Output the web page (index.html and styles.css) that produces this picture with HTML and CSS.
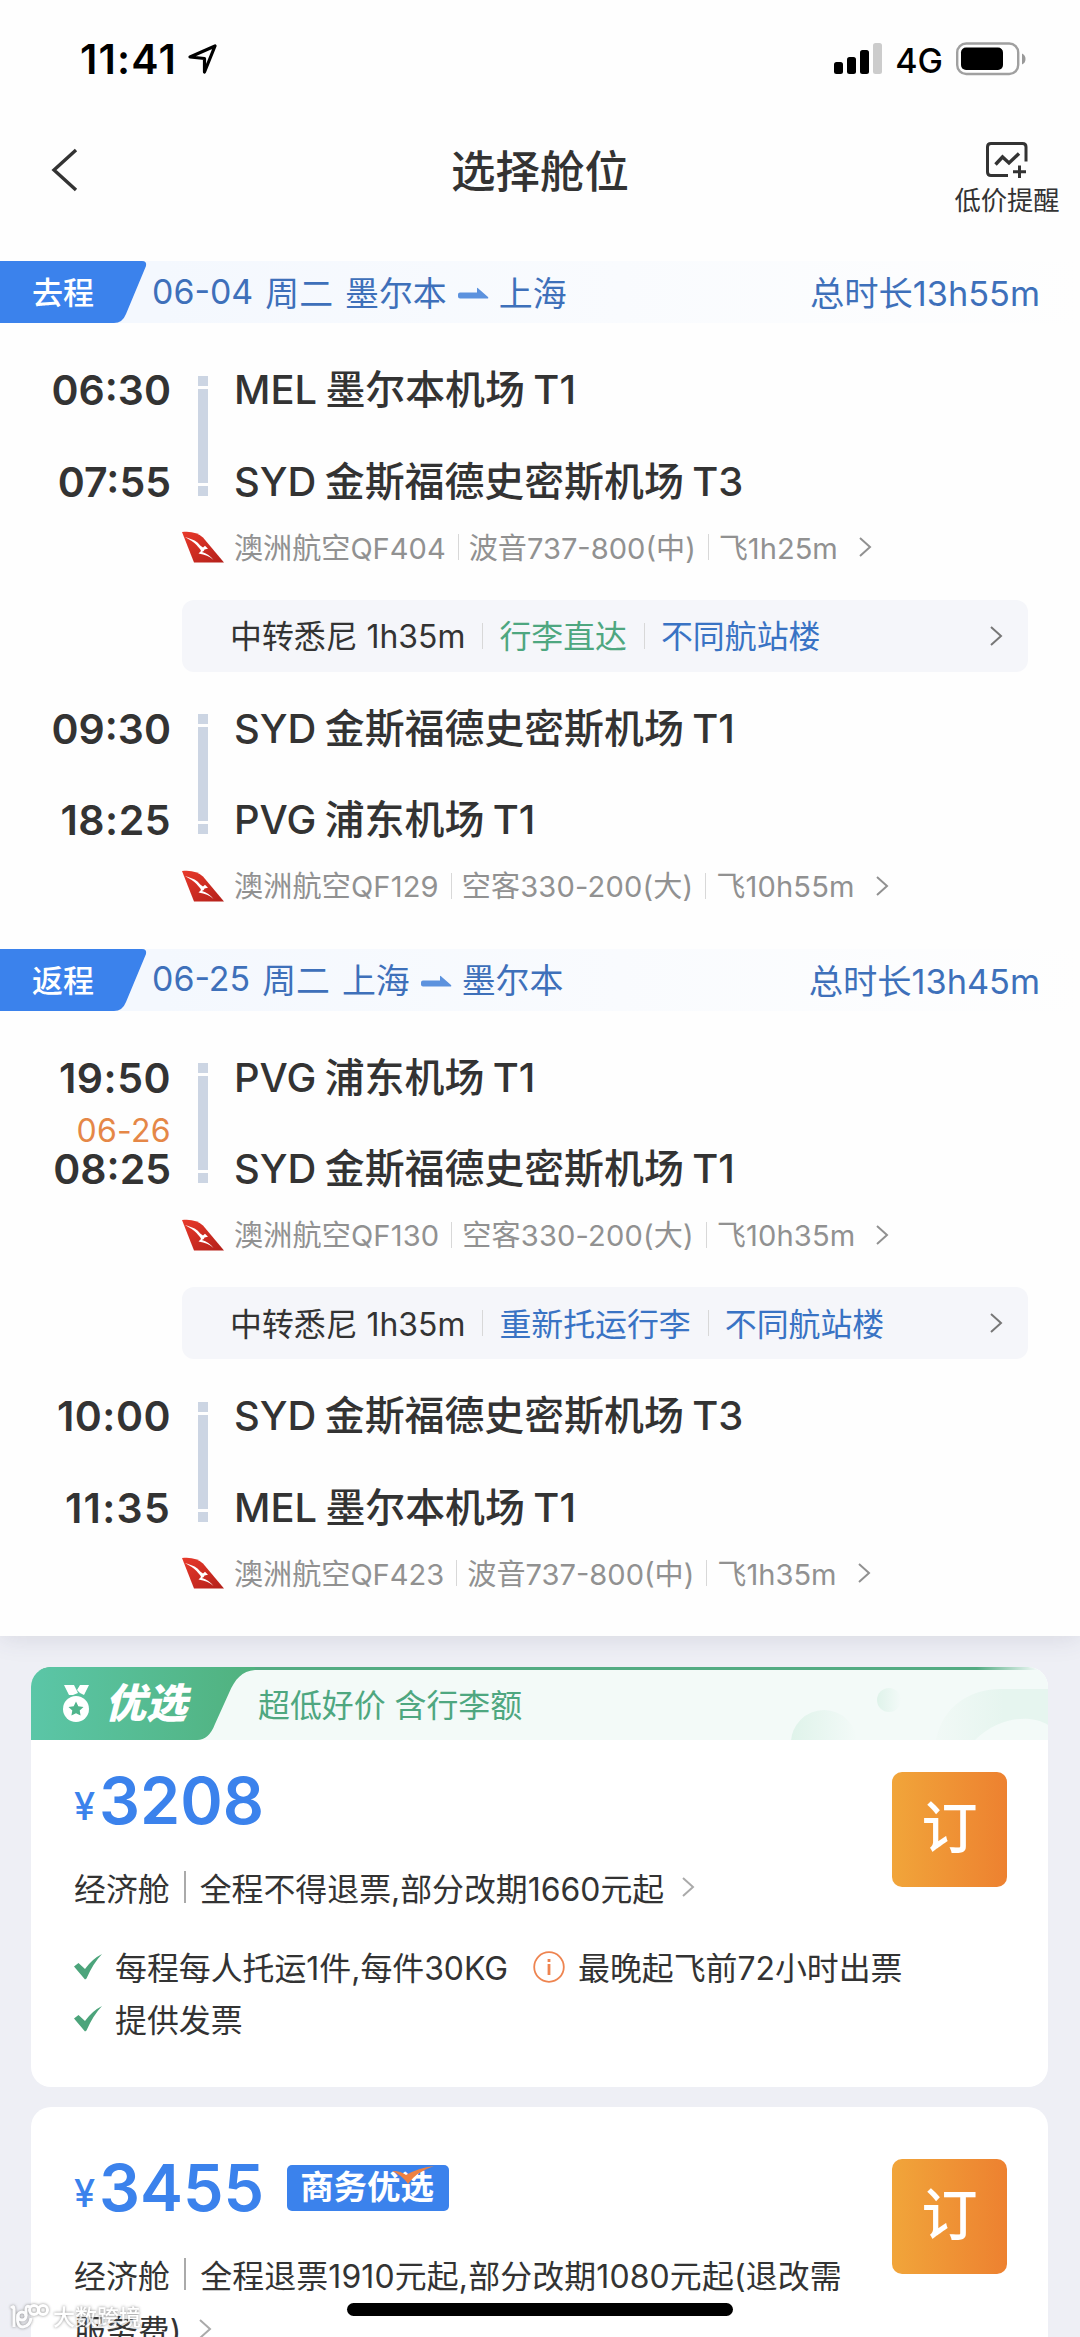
FILE: index.html
```html
<!DOCTYPE html>
<html lang="zh-CN">
<head>
<meta charset="utf-8">
<title>选择舱位</title>
<link rel="stylesheet" href="styles.css">
</head>
<body>
<svg class="defs" width="0" height="0">
  <symbol id="chevron" viewBox="0 0 14 22"><path d="M2 2l10 9-10 9" fill="none" stroke="currentColor" stroke-width="2"/></symbol>
  <symbol id="arrow" viewBox="0 0 32 12"><path d="M1 7.500Q1 5.500 3 5.500H20V1.500Q20 .3 21 1.200L31 10Q32 11.500 30 11.500H3Q1 11.500 1 9.500Z" fill="#5c92de"/></symbol>
  <symbol id="tail" viewBox="0 0 42 32">
    <linearGradient id="red" x1="0" y1="0" x2="1" y2="1"><stop offset="0" stop-color="#e8392a"/><stop offset="1" stop-color="#b3201a"/></linearGradient>
    <path d="M0 1C9-.2 16 2 21 6.500L42 31.500H12Z" fill="url(#red)"/>
    <path d="M3 6C7 7.500 12 8.500 15.500 11.500 17.500 13.500 19 15.500 21 16.500L23 14.800 26 17.800 22.500 18.500C22 20 21 20.500 20 21 24.500 22.200 28.500 25 31.500 29 27.500 25.500 23 23.600 16.500 22.600L19 20C18.500 18 16.500 16.500 14.500 14 11.500 10.500 7.500 9 3 6Z" fill="#fff"/>
  </symbol>
  <symbol id="check" viewBox="0 0 28 26"><path d="M0 12.500L4.500 9 11 15Q18 5 28 0 19 9.500 12.500 24.500L11 25.500 0 12.500Z" fill="#4ca47b"/></symbol>
</svg>

<div class="screen">
  <section class="panel">
    <div class="status">
      <div class="status-left"><span class="clock">11:41</span>
        <svg width="30" height="30" viewBox="0 0 30 30"><path d="M2 13L27 2 16.500 28V14.500Z" fill="none" stroke="#000" stroke-width="3.200" stroke-linejoin="round"/></svg>
      </div>
      <div class="status-right">
        <svg width="49" height="32" viewBox="0 0 49 32"><rect x="0" y="19" width="9" height="12" rx="2.500"/><rect x="13" y="14" width="9" height="17" rx="2.500"/><rect x="26" y="7" width="9" height="24" rx="2.500"/><rect x="39" y="0" width="9" height="31" rx="2.500" fill="#ccc"/></svg>
        <span class="net">4G</span>
        <svg width="70" height="34" viewBox="0 0 70 34"><rect x="1.200" y="1.500" width="61" height="30.500" rx="9" fill="#fff" stroke="#a0a0a0" stroke-width="2.400"/><rect x="5" y="5.500" width="42" height="22.500" rx="5"/><path d="M66 11.500v11q3.500-1.500 3.500-5.500T66 11.500Z" fill="#999"/></svg>
      </div>
    </div>

    <header class="nav">
      <svg class="back" width="28" height="44" viewBox="0 0 28 44"><path d="M25 2L3 22l22 20" fill="none" stroke="#333" stroke-width="3.400"/></svg>
      <h1>选择舱位</h1>
      <div class="alert">
        <svg width="44" height="38" viewBox="0 0 44 38" fill="none" stroke="#333" stroke-width="3"><path d="M41 20.500V6Q41 2.500 37.500 2.500H6Q2.500 2.500 2.500 6V31Q2.500 34.500 6 34.500H23"/><path d="M10.500 23.500l7-7.500 6.500 6L34 12.500" stroke-width="3.400"/><path d="M34.500 24.500V37M28 30.800H41"/></svg>
        <span>低价提醒</span>
      </div>
    </header>

    <div class="strip">
      <div class="dir"><svg width="147" height="62" viewBox="0 0 147 62"><path d="M0 0H142Q147 0 146 5L126 53Q122.500 62 114 62H0Z" fill="#3b82ec"/></svg><span>去程</span></div>
      <div class="route"><span>06-04</span><span>周二</span><span>墨尔本</span><svg width="32" height="12"><use href="#arrow"/></svg><span>上海</span></div>
      <div class="total">总时长13h55m</div>
    </div>
    <div class="journey">
      <div class="leg">
        <div class="time">06:30</div><div class="bar"><i></i><b></b><i></i></div><div class="port">MEL 墨尔本机场 T1</div>
        <div class="time">07:55</div><div class="port">SYD 金斯福德史密斯机场 T3</div>
      </div>
      <div class="plane"><svg class="logo"><use href="#tail"/></svg><span>澳洲航空QF404</span><em></em><span>波音737-800(中)</span><em></em><span>飞1h25m</span><svg class="chev"><use href="#chevron"/></svg></div>
      <div class="transfer"><span>中转悉尼 1h35m</span><em></em><span class="green">行李直达</span><em></em><span class="blue">不同航站楼</span><svg class="chev"><use href="#chevron"/></svg></div>
      <div class="leg">
        <div class="time">09:30</div><div class="bar"><i></i><b></b><i></i></div><div class="port">SYD 金斯福德史密斯机场 T1</div>
        <div class="time loose">18:25</div><div class="port">PVG 浦东机场 T1</div>
      </div>
      <div class="plane wide"><svg class="logo"><use href="#tail"/></svg><span>澳洲航空QF129</span><em></em><span>空客330-200(大)</span><em></em><span>飞10h55m</span><svg class="chev"><use href="#chevron"/></svg></div>
    </div>

    <div class="strip">
      <div class="dir"><svg width="147" height="62" viewBox="0 0 147 62"><path d="M0 0H142Q147 0 146 5L126 53Q122.500 62 114 62H0Z" fill="#3b82ec"/></svg><span>返程</span></div>
      <div class="route"><span>06-25</span><span>周二</span><span>上海</span><svg width="32" height="12"><use href="#arrow"/></svg><span>墨尔本</span></div>
      <div class="total">总时长13h45m</div>
    </div>
    <div class="journey">
      <div class="leg">
        <div class="time loose">19:50</div><div class="bar"><i></i><b></b><i></i></div><div class="port">PVG 浦东机场 T1</div>
        <div class="time"><small>06-26</small>08:25</div><div class="port">SYD 金斯福德史密斯机场 T1</div>
      </div>
      <div class="plane wide"><svg class="logo"><use href="#tail"/></svg><span>澳洲航空QF130</span><em></em><span>空客330-200(大)</span><em></em><span>飞10h35m</span><svg class="chev"><use href="#chevron"/></svg></div>
      <div class="transfer"><span>中转悉尼 1h35m</span><em></em><span class="blue">重新托运行李</span><em></em><span class="blue">不同航站楼</span><svg class="chev"><use href="#chevron"/></svg></div>
      <div class="leg">
        <div class="time loose">10:00</div><div class="bar"><i></i><b></b><i></i></div><div class="port">SYD 金斯福德史密斯机场 T3</div>
        <div class="time looser">11:35</div><div class="port">MEL 墨尔本机场 T1</div>
      </div>
      <div class="plane"><svg class="logo"><use href="#tail"/></svg><span>澳洲航空QF423</span><em></em><span>波音737-800(中)</span><em></em><span>飞1h35m</span><svg class="chev"><use href="#chevron"/></svg></div>
    </div>
  </section>

  <main class="fares">
    <article class="card">
      <div class="ribbon">
        <svg class="ribbon-bg" width="1017" height="73" viewBox="0 0 1017 73">
          <defs>
            <linearGradient id="tab" x1="0" y1="0" x2="230" y2="0" gradientUnits="userSpaceOnUse"><stop offset="0" stop-color="#5bc6a7"/><stop offset="1" stop-color="#50b17d"/></linearGradient>
            <linearGradient id="line" x1="0" x2="1017" y1="0" y2="0" gradientUnits="userSpaceOnUse"><stop offset="0" stop-color="#53ab82"/><stop offset=".93" stop-color="#53ab82"/><stop offset=".99" stop-color="#53ab82" stop-opacity="0"/></linearGradient>
            <linearGradient id="dot"><stop offset="0" stop-color="#dff3ea"/><stop offset="1" stop-color="#f3faf8"/></linearGradient>
            <linearGradient id="ring"><stop offset="0" stop-color="#f1f9f6"/><stop offset=".6" stop-color="#e6f5ef"/></linearGradient>
          </defs>
          <rect width="1017" height="73" fill="#f3faf8"/>
          <circle cx="793" cy="76" r="33" fill="url(#dot)"/><circle cx="858" cy="33" r="12" fill="url(#dot)"/>
          <path d="M905 73C912 38 940 22 970 22H1017V58C1002 48 970 48 944 73Z" fill="url(#ring)"/>
          <rect y="0" width="1017" height="3" fill="url(#line)"/>
          <path d="M0 0H224V3C211 4 204 12 198 26L184 57Q178 73 166 73H0Z" fill="url(#tab)"/>
        </svg>
        <svg class="medal" width="26" height="37" viewBox="0 0 26 37"><path d="M1 0H11L15 8 10 10H6ZM17 0H26L21 10 17 8 14 5Z" fill="#fff"/><circle cx="13" cy="24" r="13" fill="#fff"/><path d="M13 16.500l2.300 4.700 5.200.7-3.800 3.600.9 5.100-4.600-2.400-4.600 2.400.9-5.100-3.800-3.600 5.200-.7Z" fill="#50b58c"/></svg>
        <strong>优选</strong>
        <span class="perk">超低好价 含行李额</span>
      </div>
      <div class="body">
        <div class="info">
          <div class="price"><small>¥</small>3208</div>
          <div class="rule"><span>经济舱</span><em></em><span>全程不得退票,部分改期1660元起</span><svg class="chev"><use href="#chevron"/></svg></div>
          <div class="tags">
            <div><svg width="28" height="26"><use href="#check"/></svg><span>每程每人托运1件,每件30KG</span></div>
            <div class="notice"><svg width="32" height="32" viewBox="0 0 32 32"><circle cx="16" cy="16" r="14.800" fill="none" stroke="#ee8450" stroke-width="1.800"/><path d="M16 13V24M16 8V11" stroke="#ee8450" stroke-width="2.800"/></svg><span>最晚起飞前72小时出票</span></div>
            <div><svg width="28" height="26"><use href="#check"/></svg><span>提供发票</span></div>
          </div>
        </div>
        <button class="book">订</button>
      </div>
    </article>

    <article class="card second">
      <div class="body">
        <div class="info">
          <div class="price"><small>¥</small>3455<span class="badge">商务优选<svg width="42" height="19" viewBox="0 0 42 19"><path d="M0 5Q8 4.500 14 9 26 2 42 0 24 6 16 18 10 9 0 5Z" fill="#ee8142"/></svg></span></div>
          <div class="rule refund"><span>经济舱</span><em></em><span>全程退票1910元起,部分改期1080元起(退改需</span></div>
          <div class="rule more"><span>服务费)</span><svg class="chev"><use href="#chevron"/></svg></div>
        </div>
        <button class="book">订</button>
      </div>
    </article>
  </main>

  <div class="watermark"><svg width="40" height="26" viewBox="0 0 40 26" fill="none" stroke="#fff" stroke-width="3"><path d="M2 4Q5 1 5 5V23M9 10Q7 23 14 23 21 22 22 14"/><circle cx="13" cy="12" r="4"/><path d="M17 12V5Q17 1 21 3"/><circle cx="25" cy="6" r="4.500"/><circle cx="34" cy="6" r="4.500"/></svg><span>大数跨境</span></div>
  <div class="home"></div>
</div>
</body>
</html>
```

FILE: styles.css
```css
* { box-sizing: border-box; }
body { margin: 0; background: #eeeff5; }
.defs { position: absolute; }
svg { display: block; flex: none; }
em, i, b { display: block; flex: none; }

.screen {
  position: relative;
  width: 1080px;
  height: 2337px;
  overflow: hidden;
  color: #333;
  font-family: Inter, "Noto Sans CJK SC", sans-serif;
  font-size: 31px;
  white-space: nowrap;
}
.panel {
  height: 1636px;
  background: #fefefe;
  box-shadow: 0 2px 24px rgba(60, 65, 95, .13);
  position: relative;
}

.status { display: flex; justify-content: space-between; align-items: center; height: 118px; padding: 0 54px 0 80px; }
.status-left, .status-right { display: flex; align-items: center; color: #000; }
.status-left { gap: 11px; }
.clock { font-size: 41px; font-weight: 600; line-height: 50px; letter-spacing: 1.200px; }
.net { font-size: 34px; font-weight: 500; margin: 2px 13px 0 12px; }

.nav { display: grid; grid-template-columns: 200px 1fr 200px; align-items: center; height: 143px; padding-bottom: 36px; }
.back { margin: -4px 0 0 51px; }
h1 { margin: 0; font-size: 44.500px; line-height: 60px; font-weight: 500; text-align: center; }
.alert { display: flex; flex-direction: column; align-items: center; gap: 6px; width: 106px; margin: 14px 0 0 74px; font-size: 26.300px; line-height: 32px; }

.strip {
  display: flex;
  align-items: center;
  height: 62px;
  padding-right: 40px;
  color: #3e70ba;
  font-size: 33.900px;
  background: linear-gradient(90deg, #f4f8fe 15%, #fefefe);
}
.dir { display: grid; align-items: center; width: 152px; color: #fff; font-size: 31px; font-weight: 500; }
.dir > * { grid-area: 1 / 1; }
.dir span { padding: 0 0 3px 32px; }
.route { display: flex; align-items: center; flex: 1; }
.route span, .total { padding-bottom: 2px; }
.route span + span { margin-left: 12px; }
.route svg { margin: 2px 10px 0; }
.total { font-size: 34.300px; }

.journey { height: 625.500px; padding-top: 21px; }
.leg { display: grid; grid-template-columns: 171px 65px 1fr; grid-auto-rows: 91.500px; align-items: center; }
.time { position: relative; font-size: 41px; font-weight: 600; text-align: right; grid-column: 1; padding-top: 1px; }
.loose { letter-spacing: .5px; }
.looser { letter-spacing: 1.300px; }
.time small { position: absolute; right: 0; bottom: 46px; color: #e58747; font-size: 32px; line-height: 34px; font-weight: 400; letter-spacing: .3px; }
.port { grid-column: 3; margin-left: -2px; padding-top: 1px; font-size: 39.900px; font-weight: 500; line-height: 56px; word-spacing: -2.200px; }
.bar { grid-column: 2; grid-row: 1 / 3; display: grid; grid-template-rows: 10px 1fr 10px; gap: 3px; width: 10px; height: 120px; margin-left: 27px; }
.bar > * { background: #ccd5e3; }

.plane { display: flex; align-items: center; height: 40.500px; padding-left: 182px; color: #919191; font-size: 29.100px; }
.plane span, .transfer span { padding-bottom: 3px; }
.plane.wide { letter-spacing: .15px; }
.logo { width: 42px; height: 32px; margin-right: 10px; }
.plane em, .transfer em { width: 1px; height: 26px; margin: 0 10px 0 12px; background: #d8d8d8; }
.chev { width: 14px; height: 22px; }
.plane .chev { margin-left: 20px; }
.transfer { display: flex; align-items: center; width: 846px; height: 72px; margin: 32px 0 11px 182px; padding: 0 25px 0 48px; border-radius: 12px; background: #f5f6fa; font-size: 31.900px; }
.transfer em { margin: 0 16px 0 17px; }
.transfer .chev { margin-left: auto; color: #777; }
.green { color: #4ea780; }
.blue { color: #3973c4; }

.fares { display: flex; flex-direction: column; gap: 20px; padding: 31px 32px 0 31px; }
.card { border-radius: 20px; background: #fff; overflow: hidden; height: 420px; }
.ribbon { display: flex; align-items: center; position: relative; height: 73px; padding-left: 32px; }
.ribbon-bg { position: absolute; left: 0; top: 0; }
.ribbon > :not(.ribbon-bg) { position: relative; }
.ribbon strong { width: 153px; margin-left: 16px; padding-bottom: 2px; color: #fff; font-size: 41px; line-height: 60px; font-weight: 900; font-style: italic; }
.perk { padding-bottom: 2px; color: #4ea780; font-size: 31.900px; }
.body { display: flex; justify-content: space-between; padding: 32px 41px 0 43px; }
.second .body { padding-top: 52px; }
.book { width: 115px; height: 115px; padding: 0 0 11px; border: 0; border-radius: 10px; color: #fff; font: 500 56px "Noto Sans CJK SC", sans-serif; line-height: 100px; background: linear-gradient(90deg, #f1a53a, #ed8130); flex: none; }
.info { width: 800px; }
.price { display: flex; align-items: center; height: 56px; padding-top: 1px; color: #3b82ec; font-size: 64.500px; line-height: 56px; font-weight: 600; }
.price small { width: 25px; padding-top: 10px; font-size: 38px; font-weight: 500; }
.badge { position: relative; width: 162px; height: 46px; margin-left: 23px; padding-left: 13px; border-radius: 5px; background: #3b82ec; color: #fff; font-size: 33.500px; line-height: 44px; font-weight: 700; }
.badge svg { position: absolute; left: 105px; top: 1px; }
.rule { display: flex; align-items: center; height: 55px; margin-top: 31px; font-size: 31.900px; }
.rule em { width: 2px; height: 32px; margin: 0 14px 0 14px; background: #aaa; }
.rule .chev { margin-left: 17px; color: #aaa; }
.refund { letter-spacing: .15px; }
.rule.more { margin-top: 0; }
.tags { display: grid; grid-template-columns: 459px 400px; grid-auto-rows: 52px; margin-top: 27px; font-size: 31.900px; }
.tags > div { display: flex; align-items: center; gap: 13px; }
.tags span { padding-bottom: 3px; }

.watermark { position: absolute; left: 9px; top: 2302px; display: flex; align-items: center; gap: 4px; color: #fff; font-size: 22px; font-weight: 500; line-height: 30px; filter: drop-shadow(0 0 1.500px #777); opacity: .85; }
.home { position: absolute; left: 347px; top: 2303px; width: 386px; height: 13px; border-radius: 7px; background: #000; }
```
